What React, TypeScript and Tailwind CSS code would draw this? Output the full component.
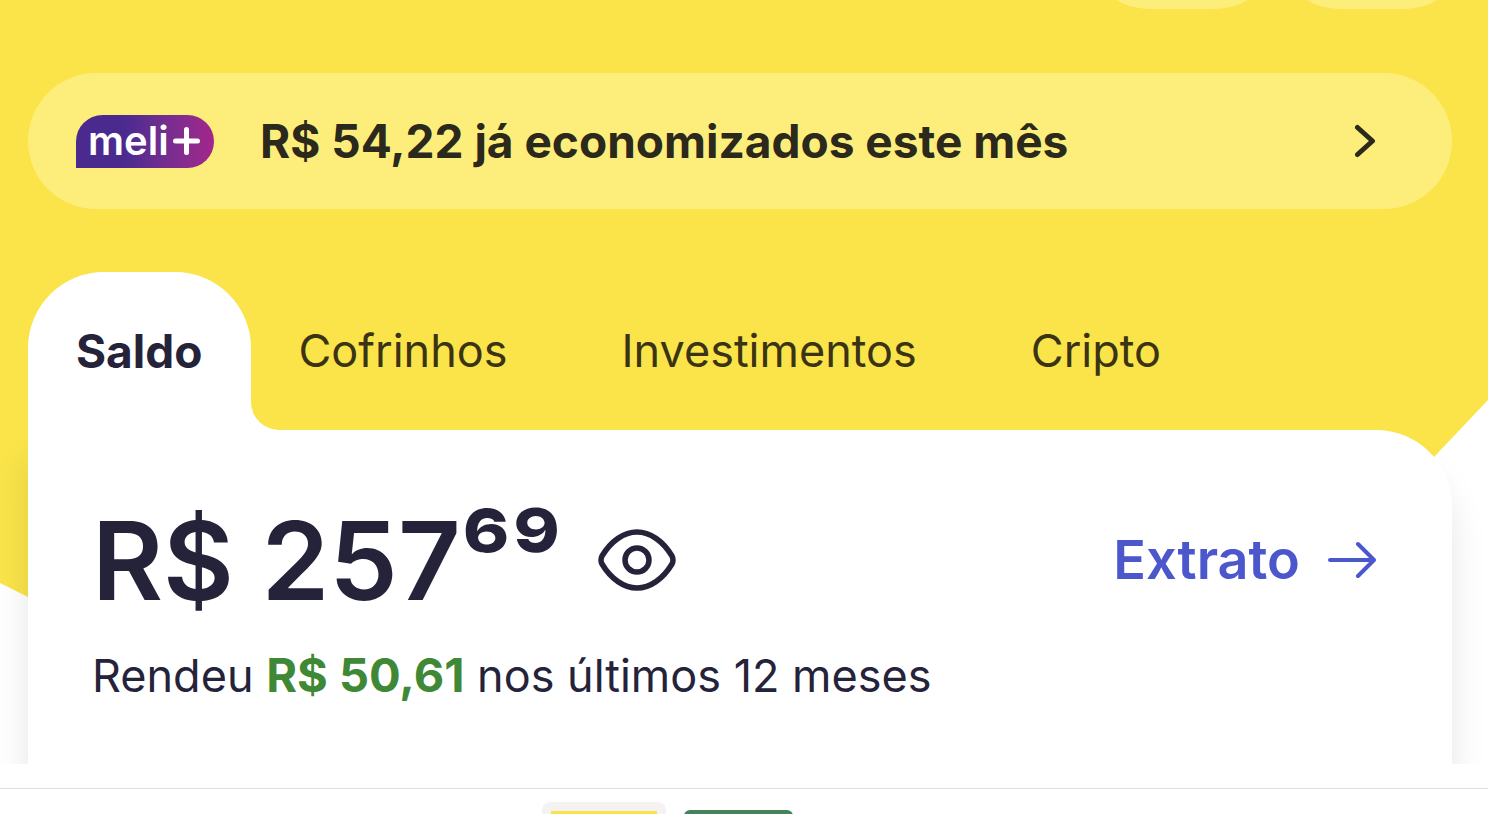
import { useState } from 'react'

const TABS = ['Saldo', 'Cofrinhos', 'Investimentos', 'Cripto']

export default function App() {
  return (
    <div className="h-screen overflow-hidden bg-white font-['Inter',sans-serif] text-[#25233a]">
      <main className="relative isolate overflow-hidden">
        <Backdrop />
        <TopActions />
        <div className="pl-7 pr-9">
          <SavingsBanner />
          <BalanceCard />
        </div>
      </main>
      <Thumbnails />
    </div>
  )
}

function Backdrop() {
  return (
    <svg
      viewBox="0 0 1488 764"
      preserveAspectRatio="none"
      className="absolute inset-0 -z-10 h-full w-full"
      aria-hidden="true"
    >
      <path d="M0 0H1488V400L1434 457C1150 740 500 820 28 597L0 583Z" fill="#fae44a" />
    </svg>
  )
}

function TopActions() {
  return (
    <header className="flex h-[9px] items-end justify-end gap-[30px] overflow-hidden pr-9">
      <button
        type="button"
        aria-label="Buscar"
        className="h-32 w-40 shrink-0 rounded-[48px/32px] bg-[#fdee7b]"
      />
      <button
        type="button"
        aria-label="Ajuda"
        className="h-32 w-40 shrink-0 rounded-[48px/32px] bg-[#fdee7b]"
      />
    </header>
  )
}

function SavingsBanner() {
  return (
    <a
      href="#meli"
      className="mt-16 flex h-[136px] items-center rounded-full bg-[#fdee7b] pl-12 pr-[76px] text-[#2b281c]"
    >
      <MeliLogo />
      <span className="ml-[46px] flex-1 text-[46px] leading-[56px] font-bold">
        R$ 54,22 já economizados este mês
      </span>
      <svg width="22" height="34" viewBox="0 0 22 34" fill="none" aria-hidden="true">
        <path
          d="M3.500 3.500L18.500 17L3.500 30.500"
          stroke="currentColor"
          strokeWidth="5"
          strokeLinecap="round"
          strokeLinejoin="round"
        />
      </svg>
    </a>
  )
}

function MeliLogo() {
  return (
    <span className="flex h-[53px] w-[138px] shrink-0 items-center gap-1 rounded-[27px] rounded-bl-none bg-linear-to-r from-[#4b2a90] from-35% to-[#a3258c] pl-3 text-white">
      <span className="text-[40px] leading-[52px] font-semibold">meli</span>
      <svg width="27" height="28" viewBox="0 0 27 28" aria-label="mais" role="img">
        <path
          d="M13.500 2.500V25.500M2.500 14H24.500"
          stroke="currentColor"
          strokeWidth="5"
          strokeLinecap="round"
        />
      </svg>
    </span>
  )
}

function BalanceCard() {
  const [active, setActive] = useState('Saldo')
  const [visible, setVisible] = useState(true)

  return (
    <section className="mt-[63px]">
      <div className="flex h-[158px]" role="tablist">
        {TABS.map((tab) => (
          <Tab key={tab} label={tab} active={tab === active} onSelect={() => setActive(tab)} />
        ))}
      </div>

      <div className="relative -z-10 rounded-tr-[76px] bg-white pt-[74px] pr-[76px] pb-[60px] pl-16 shadow-[0_32px_36px_rgba(0,0,0,0.1)]">
        <div className="flex items-center">
          <p className="text-[109px] leading-[112px] font-semibold">{visible ? 'R$ 257⁶⁹' : 'R$ •••'}</p>
          <button
            type="button"
            aria-label="Mostrar ou ocultar saldo"
            onClick={() => setVisible(!visible)}
            className="ml-9"
          >
            <EyeIcon />
          </button>
          <a href="#extrato" className="ml-auto flex items-center gap-7 text-[#4c57cb]">
            <span className="text-[54px] leading-[64px] font-semibold">Extrato</span>
            <svg width="48" height="38" viewBox="0 0 48 38" fill="none" aria-hidden="true">
              <path
                d="M2 19H45M30 3L46 19L30 35"
                stroke="currentColor"
                strokeWidth="4"
                strokeLinecap="round"
                strokeLinejoin="round"
              />
            </svg>
          </a>
        </div>
        <p className="mt-8 text-[45px] leading-[56px]">
          Rendeu <strong className="text-[47px] leading-none font-bold text-[#3f8836]">R$ 50,61</strong> nos últimos 12
          meses
        </p>
      </div>
    </section>
  )
}

function Tab({ label, active, onSelect }: { label: string; active: boolean; onSelect: () => void }) {
  if (active) {
    return (
      <>
        <button
          type="button"
          role="tab"
          aria-selected="true"
          className="rounded-t-[76px] bg-white px-12 text-[46px] font-bold"
        >
          {label}
        </button>
        {/* concave foot joining the tab to the card */}
        <svg width="28" height="28" viewBox="0 0 28 28" className="-mr-7 self-end" aria-hidden="true">
          <path d="M0 0A28 28 0 0 0 28 28H0Z" fill="#fff" />
        </svg>
      </>
    )
  }

  return (
    <button
      type="button"
      role="tab"
      aria-selected="false"
      onClick={onSelect}
      className="mr-[18px] px-12 text-[45px] text-[#3a3414]"
    >
      {label}
    </button>
  )
}

function EyeIcon() {
  return (
    <svg width="78" height="62" viewBox="0 0 78 62" fill="none" stroke="currentColor" strokeWidth="5.500" aria-hidden="true">
      <path
        d="M4 27C13 12 26 3 39 3S65 12 74 27Q76 31 74 35C65 50 52 59 39 59S13 50 4 35Q2 31 4 27Z"
        strokeLinejoin="round"
      />
      <ellipse cx="39" cy="31" rx="12" ry="12" />
    </svg>
  )
}

function Thumbnails() {
  return (
    <footer className="mt-6 border-t border-[#dfdfdf] pt-[13px] pl-[542px]">
      <div className="flex gap-[18px]">
        <button type="button" aria-label="Imagem 1" className="h-24 w-[124px] rounded-lg bg-[#f5f3f1] p-[9px]">
          <span className="block h-full bg-[#fae44a]" />
        </button>
        <button type="button" aria-label="Imagem 2" className="mt-2 h-20 w-[109px] rounded-md bg-[#43845a]" />
      </div>
    </footer>
  )
}
